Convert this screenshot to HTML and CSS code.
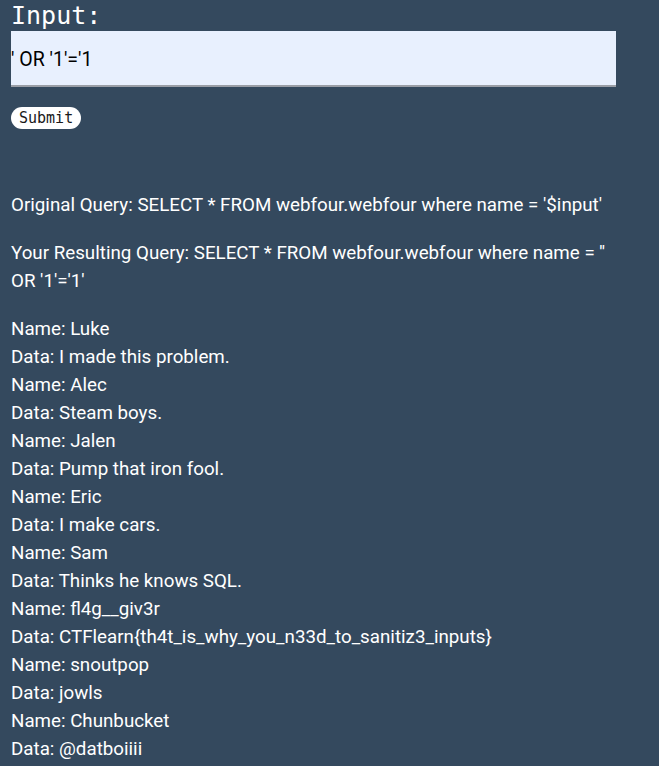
FILE: index.html
```html
<!DOCTYPE html>
<html>
<head>
<meta charset="utf-8">
<link rel="stylesheet" href="styles.css">
</head>
<body>
<form class="form">
  <label class="label" for="q">Input:</label>
  <input class="field" id="q" type="text" value="' OR '1'='1">
  <button class="submit" type="button">Submit</button>
</form>
<div class="results">
  <p>Original Query: SELECT * FROM webfour.webfour where name = '$input'</p>
  <p>Your Resulting Query: SELECT * FROM webfour.webfour where name = '' OR '1'='1'</p>
  <p>Name: Luke<br>Data: I made this problem.<br>Name: Alec<br>Data: Steam boys.<br>Name: Jalen<br>Data: Pump that iron fool.<br>Name: Eric<br>Data: I make cars.<br>Name: Sam<br>Data: Thinks he knows SQL.<br>Name: fl4g__giv3r<br>Data: CTFlearn{th4t_is_why_you_n33d_to_sanitiz3_inputs}<br>Name: snoutpop<br>Data: jowls<br>Name: Chunbucket<br>Data: @datboiiii</p>
</div>
</body>
</html>
```
FILE: styles.css
```css
html, body {
  margin: 0;
  background: #34495e;
}
body {
  padding: 0 11px;
  max-width: 605px;
  color: #ffffff;
  font-family: Roboto, "Liberation Sans", sans-serif;
}
.form {
  display: flex;
  flex-direction: column;
  align-items: flex-start;
  padding-top: 1px;
}
.label {
  font-family: "DejaVu Sans Mono", monospace;
  font-size: 25px;
  line-height: 29px;
  color: #ffffff;
}
.field {
  box-sizing: border-box;
  width: 605px;
  height: 56px;
  margin: 1px 0 0;
  padding: 2px 0 0;
  border: none;
  border-bottom: 2px solid #9a9ea6;
  background: #e8f0fe;
  font-family: Roboto, "Liberation Sans", sans-serif;
  font-size: 19.5px;
  color: #000000;
  outline: none;
}
.submit {
  margin-top: 20px;
  height: 22px;
  padding: 0 8px;
  border: none;
  border-radius: 11px;
  background: #ffffff;
  color: #1a1a1a;
  font-family: "DejaVu Sans Mono", monospace;
  font-size: 15px;
  line-height: 22px;
}
.results {
  padding-top: 42px;
}
.results p {
  margin: 20px 0;
  font-size: 18.75px;
  line-height: 28px;
}
```
